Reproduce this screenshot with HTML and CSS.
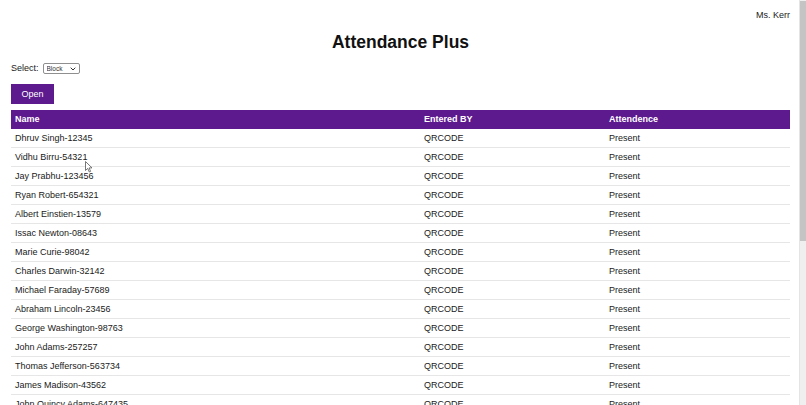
FILE: index.html
```html
<!DOCTYPE html>
<html lang="en">
<head>
<meta charset="utf-8">
<title>Attendance Plus</title>
<link rel="stylesheet" href="styles.css">
</head>
<body>
<div class="shell">
<div class="page">
  <div class="topbar"><span class="user">Ms. Kerr</span></div>
  <h1 class="title">Attendance Plus</h1>
  <div class="select-row">
    <label class="select-label" for="blk">Select:</label>
    <span class="select-wrap">
      <select id="blk" class="select"><option>Block</option></select>
      <svg class="chev" width="6" height="4" viewBox="0 0 6 4"><path d="M0.7 0.7 L3 3 L5.3 0.7" fill="none" stroke="#333" stroke-width="1"/></svg>
    </span>
  </div>
  <div class="btn-row"><button class="open-btn">Open</button></div>
  <table class="grid">
    <thead>
      <tr><th class="c1">Name</th><th class="c2">Entered BY</th><th class="c3">Attendence</th></tr>
    </thead>
    <tbody>
      <tr><td>Dhruv Singh-12345</td><td>QRCODE</td><td>Present</td></tr>
      <tr><td>Vidhu Birru-54321</td><td>QRCODE</td><td>Present</td></tr>
      <tr><td>Jay Prabhu-123456</td><td>QRCODE</td><td>Present</td></tr>
      <tr><td>Ryan Robert-654321</td><td>QRCODE</td><td>Present</td></tr>
      <tr><td>Albert Einstien-13579</td><td>QRCODE</td><td>Present</td></tr>
      <tr><td>Issac Newton-08643</td><td>QRCODE</td><td>Present</td></tr>
      <tr><td>Marie Curie-98042</td><td>QRCODE</td><td>Present</td></tr>
      <tr><td>Charles Darwin-32142</td><td>QRCODE</td><td>Present</td></tr>
      <tr><td>Michael Faraday-57689</td><td>QRCODE</td><td>Present</td></tr>
      <tr><td>Abraham Lincoln-23456</td><td>QRCODE</td><td>Present</td></tr>
      <tr><td>George Washington-98763</td><td>QRCODE</td><td>Present</td></tr>
      <tr><td>John Adams-257257</td><td>QRCODE</td><td>Present</td></tr>
      <tr><td>Thomas Jefferson-563734</td><td>QRCODE</td><td>Present</td></tr>
      <tr><td>James Madison-43562</td><td>QRCODE</td><td>Present</td></tr>
      <tr><td>John Quincy Adams-647435</td><td>QRCODE</td><td>Present</td></tr>
    </tbody>
  </table>
</div>
<div class="scrollbar"><div class="thumb"></div></div>
</div>
<svg class="cursor" width="8" height="12" viewBox="0 0 8 12"><path d="M0.5 0.5 L0.5 9.5 L2.7 7.4 L4.3 11 L5.6 10.4 L4.1 6.9 L7 6.9 Z" fill="#fff" stroke="#555" stroke-width="0.8"/></svg>
</body>
</html>
```

FILE: styles.css
```css
html, body { height: 100%; }

body {
  margin: 0;
  background: #fff;
  font-family: "Liberation Sans", Arial, sans-serif;
  font-size: 9px;
  color: #1a1a1a;
  overflow: hidden;
}

.shell {
  display: flex;
  height: 100vh;
}

.page {
  flex: 1;
  min-width: 0;
  overflow: hidden;
  padding: 10px 9px 0 11px;
  display: flex;
  flex-direction: column;
}

.scrollbar {
  flex: none;
  width: 6px;
  background: #efefef;
  border-left: 1px solid #e4e4e4;
  display: flex;
  flex-direction: column;
}

.thumb {
  height: 240px;
  background: #c4c4c4;
  margin-top: 1px;
}

.topbar {
  display: flex;
  justify-content: flex-end;
  line-height: 11px;
  height: 11px;
  flex: none;
}

.title {
  flex: none;
  margin: 11px 0 0;
  text-align: center;
  font-size: 17.5px;
  line-height: 20px;
  font-weight: bold;
  color: #111;
}

.select-row {
  flex: none;
  margin-top: 10px;
  display: flex;
  align-items: center;
  gap: 4px;
  height: 12px;
}

.select-label { line-height: 12px; }

.select-wrap {
  position: relative;
  display: inline-block;
  width: 37px;
  height: 11px;
}

.select {
  -webkit-appearance: none;
  appearance: none;
  box-sizing: border-box;
  width: 37px;
  height: 11px;
  margin: 0;
  padding: 0 0 0 3px;
  font-family: "Liberation Sans", Arial, sans-serif;
  font-size: 6.5px;
  line-height: 9px;
  border: 1px solid #8f8f8f;
  border-radius: 2px;
  background: #fff;
  color: #333;
}

.chev {
  position: absolute;
  right: 4px;
  top: 4px;
  pointer-events: none;
}

.btn-row { flex: none; margin-top: 10px; display: flex; }

.open-btn {
  width: 43px;
  height: 20px;
  padding: 0;
  border: none;
  background: #5d1a8e;
  color: #fff;
  font-family: "Liberation Sans", Arial, sans-serif;
  font-size: 9px;
}

.grid {
  flex: none;
  margin-top: 6px;
  width: 779px;
  border-collapse: collapse;
  table-layout: fixed;
}

.grid th {
  background: #5d1a8e;
  color: #fff;
  font-weight: bold;
  text-align: left;
  height: 19px;
  padding: 0 4px;
  line-height: 19px;
}

.grid .c1 { width: 401px; }
.grid .c2 { width: 177px; }
.grid .c3 { width: 177px; }

.grid td {
  height: 18px;
  padding: 0 4px;
  line-height: 18px;
  border-bottom: 1px solid #e6e6e6;
  white-space: nowrap;
}

.cursor {
  position: absolute;
  left: 85px;
  top: 161px;
}
```
